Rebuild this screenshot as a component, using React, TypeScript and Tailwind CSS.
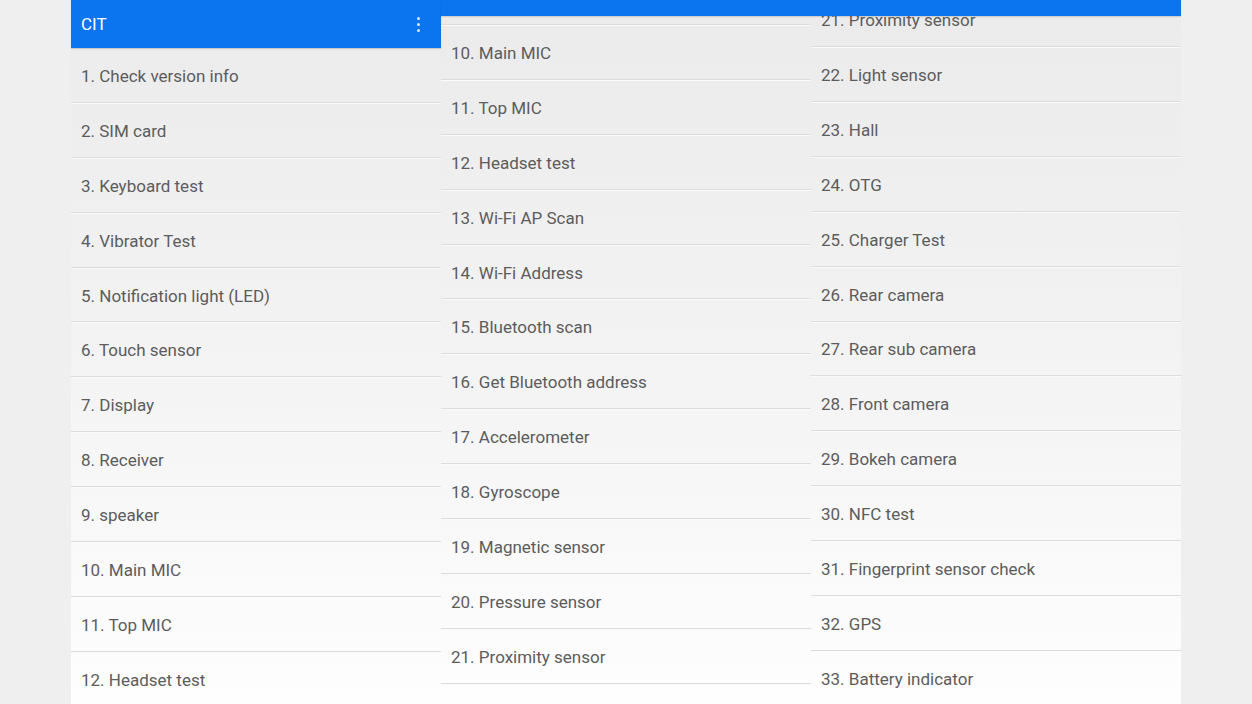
import React from "react";

const col1 = [
  "1. Check version info",
  "2. SIM card",
  "3. Keyboard test",
  "4. Vibrator Test",
  "5. Notification light (LED)",
  "6. Touch sensor",
  "7. Display",
  "8. Receiver",
  "9. speaker",
  "10. Main MIC",
  "11. Top MIC",
  "12. Headset test",
];

const col2 = [
  "10. Main MIC",
  "11. Top MIC",
  "12. Headset test",
  "13. Wi-Fi AP Scan",
  "14. Wi-Fi Address",
  "15. Bluetooth scan",
  "16. Get Bluetooth address",
  "17. Accelerometer",
  "18. Gyroscope",
  "19. Magnetic sensor",
  "20. Pressure sensor",
  "21. Proximity sensor",
];

const col3 = [
  "21. Proximity sensor",
  "22. Light sensor",
  "23. Hall",
  "24. OTG",
  "25. Charger Test",
  "26. Rear camera",
  "27. Rear sub camera",
  "28. Front camera",
  "29. Bokeh camera",
  "30. NFC test",
  "31. Fingerprint sensor check",
  "32. GPS",
  "33. Battery indicator",
];

function Row({ label }: { label: string }) {
  return (
    <div className="h-[54.9px] shrink-0 flex items-center px-[10px] pt-[3px] border-b border-[#dcdcdc] shadow-[0_1px_0_#fafafa]">
      <span className="text-[17px] text-[#5c5c5c] whitespace-nowrap leading-none">{label}</span>
    </div>
  );
}

export default function App() {
  return (
    <div
      className="w-[1252px] h-[704px] overflow-hidden bg-[#efefef] flex pl-[71px]"
      style={{ fontFamily: "Roboto, 'Noto Sans', sans-serif" }}
    >
      <div className="w-[370px] h-full flex flex-col bg-gradient-to-b from-[#ebebeb] via-[#f3f3f3] to-[#fefefe]">
        <div className="h-[48px] shrink-0 bg-[#0b74ef] flex items-center justify-between pl-[10px] pr-[21px] shadow-[0_1px_1px_rgba(0,0,0,0.15)] relative z-10">
          <span className="text-white text-[17px] leading-none">CIT</span>
          <div className="flex flex-col gap-[3px]">
            <span className="w-[3px] h-[3px] rounded-full bg-[#d6e8ff]" />
            <span className="w-[3px] h-[3px] rounded-full bg-[#d6e8ff]" />
            <span className="w-[3px] h-[3px] rounded-full bg-[#d6e8ff]" />
          </div>
        </div>
        <div className="flex-1 overflow-hidden flex flex-col">
          {col1.map((t) => (
            <Row key={t} label={t} />
          ))}
        </div>
      </div>
      <div className="w-[740px] h-full flex flex-col">
        <div className="h-[16px] shrink-0 bg-[#0b74ef] shadow-[0_1px_1px_rgba(0,0,0,0.12)] relative z-10" />
        <div className="flex-1 flex overflow-hidden">
          <div className="w-[370px] h-full flex flex-col bg-gradient-to-b from-[#ebebeb] via-[#f3f3f3] to-[#fefefe]">
            <div className="h-[9px] shrink-0 border-b border-[#dcdcdc] shadow-[0_1px_0_#fafafa]" />
            {col2.map((t) => (
              <Row key={t} label={t} />
            ))}
          </div>
          <div className="w-[370px] h-full flex flex-col overflow-hidden bg-gradient-to-b from-[#ebebeb] via-[#f3f3f3] to-[#fefefe]">
            <div className="flex flex-col mt-[-23.8px]">
              {col3.map((t) => (
                <Row key={t} label={t} />
              ))}
            </div>
          </div>
        </div>
      </div>
    </div>
  );
}
